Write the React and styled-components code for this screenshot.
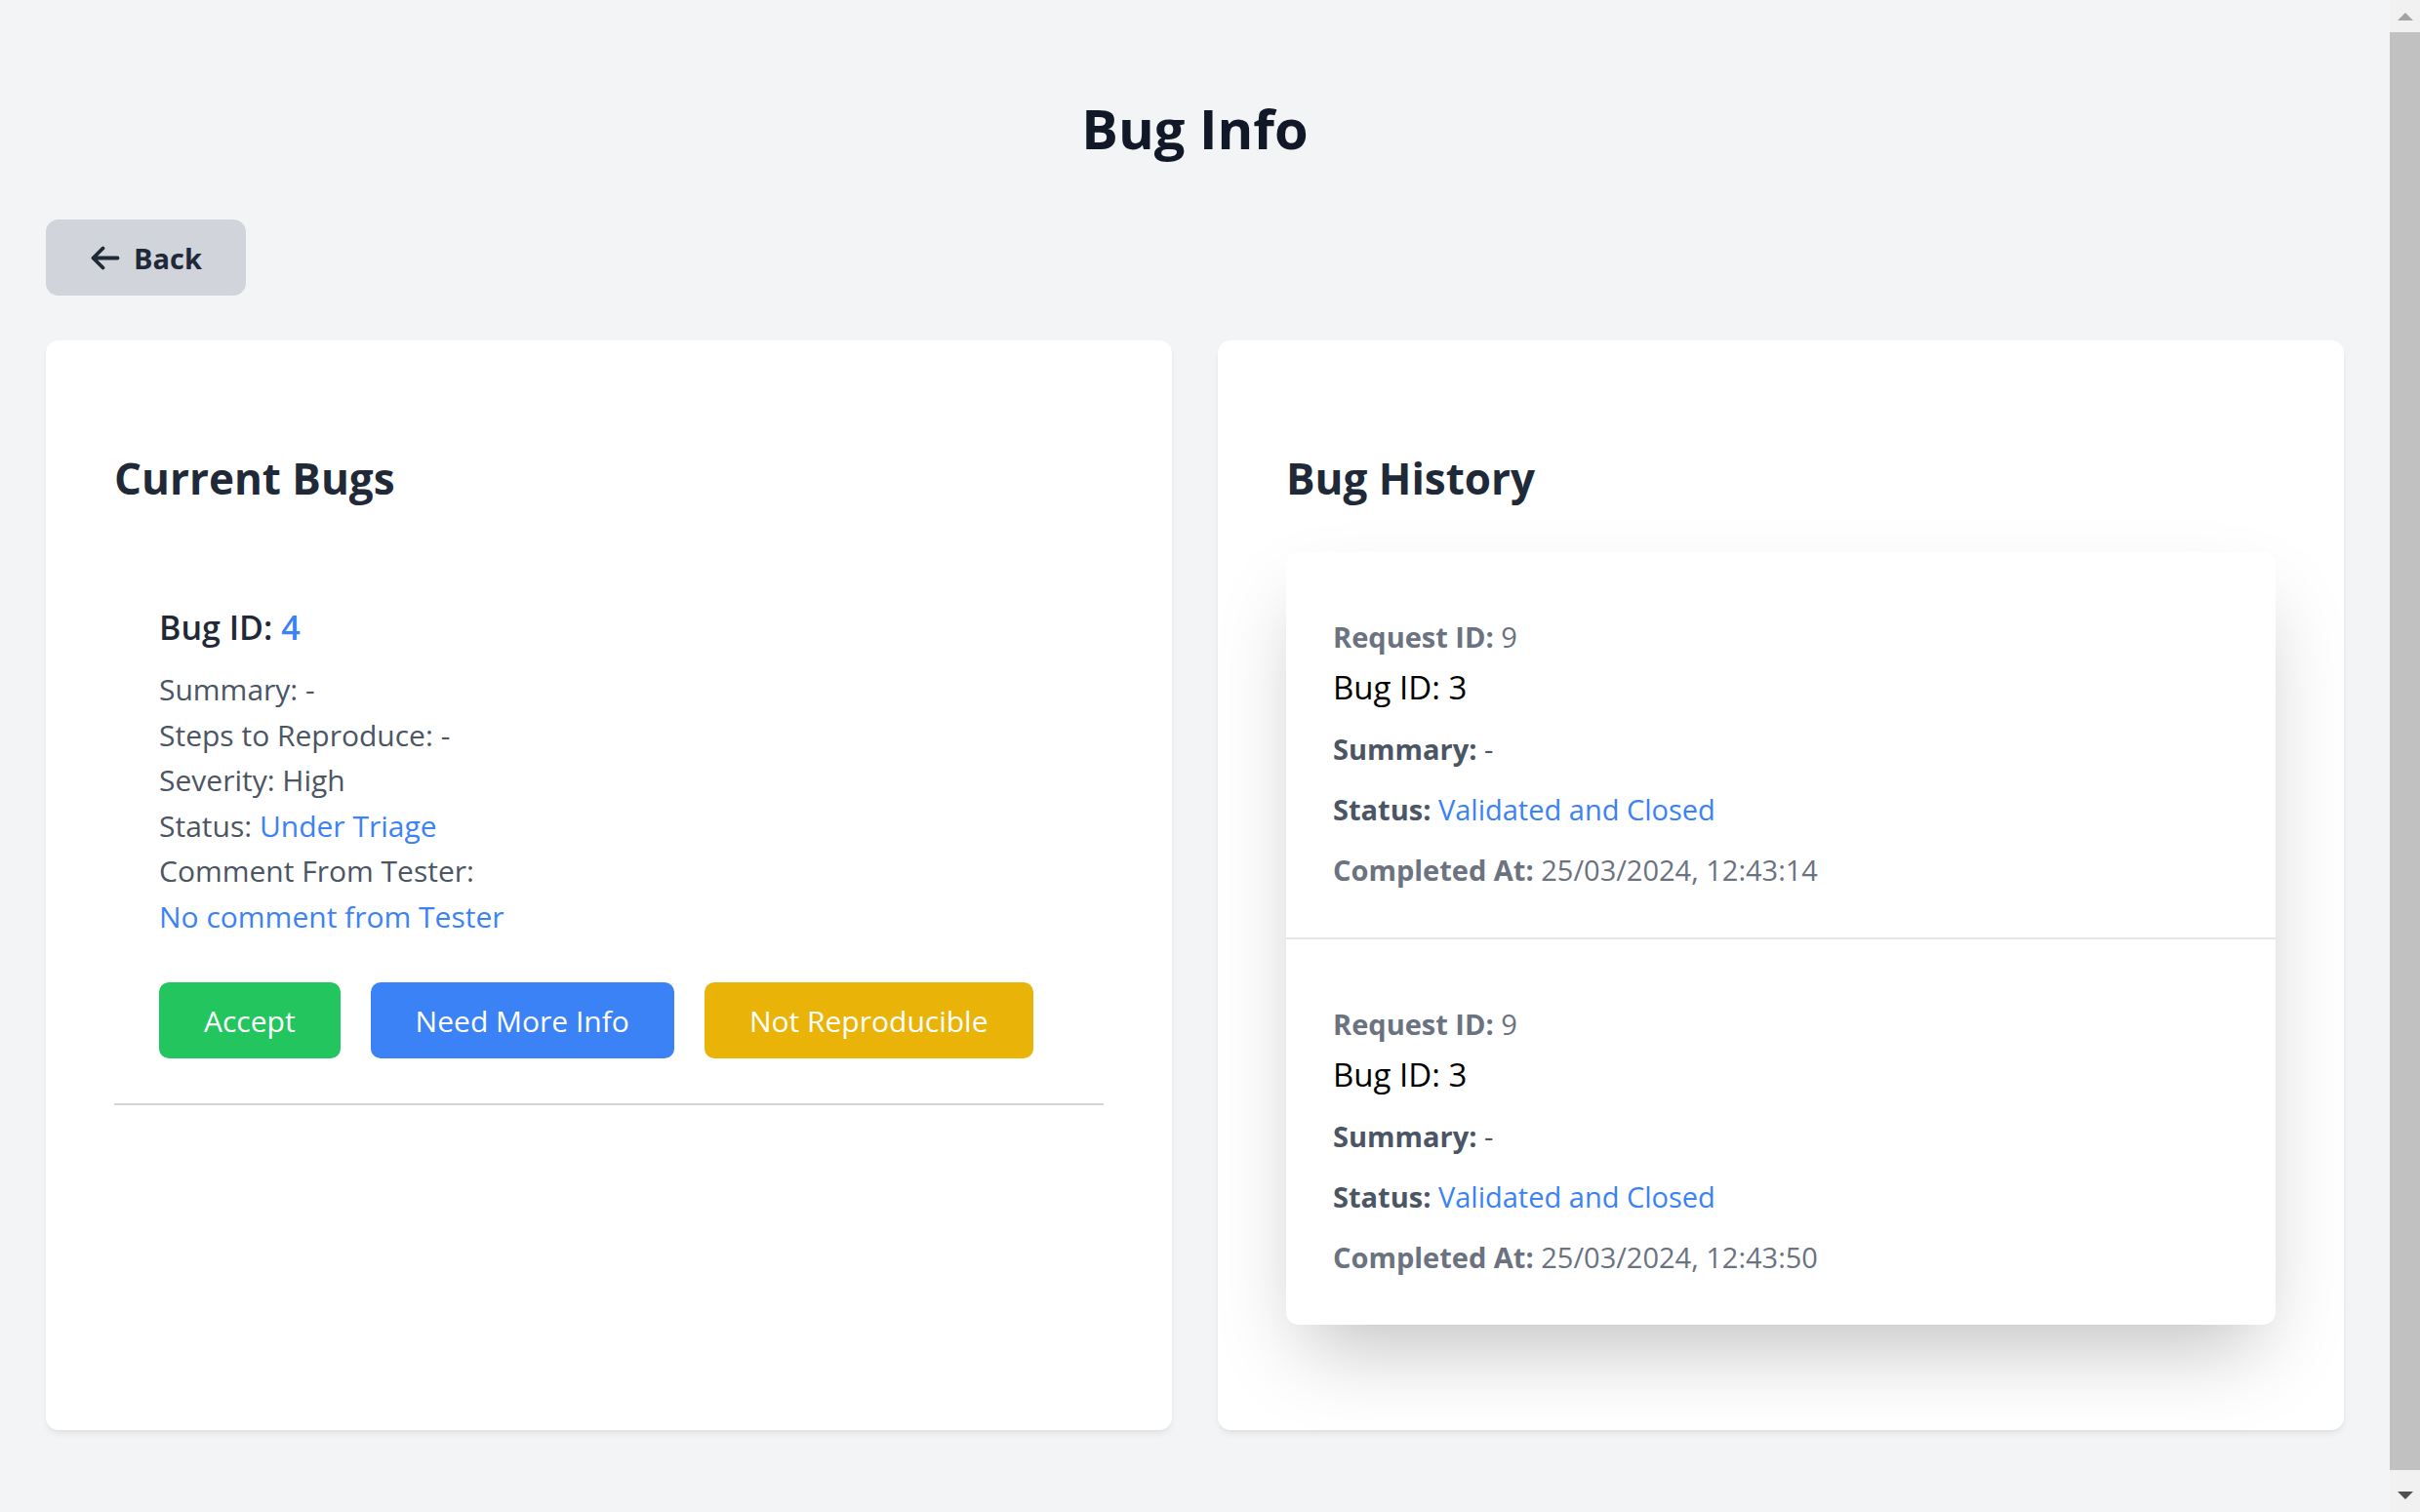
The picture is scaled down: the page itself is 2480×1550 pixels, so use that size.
import React from 'react';
import styled, { createGlobalStyle } from 'styled-components';

//Global:
const GlobalStyle = createGlobalStyle`
    html,
    body {
        margin: 0;
        padding: 0;
        background: #f3f4f6;
    }

    body {
        font-family: "Open Sans", "Noto Sans", sans-serif;
        color: #1f2937;
    }

    *,
    *::before,
    *::after {
        box-sizing: border-box;
    }
`;

//Styles:
const Page = styled.div`
    padding: 96px 78px 98px 47px;
`;

const PageTitle = styled.h1`
    margin: 0;
    text-align: center;
    font-size: 56px;
    line-height: 70px;
    font-weight: 700;
    color: #111827;
`;

const Toolbar = styled.div`
    display: flex;
    margin-top: 59px;
`;

const BackButton = styled.button`
    display: inline-flex;
    align-items: center;
    gap: 14px;
    height: 78px;
    padding: 0 45px 0 46px;
    border: none;
    border-radius: 13px;
    background: #d1d5db;
    color: #1f2937;
    font-family: inherit;
    font-size: 29px;
    font-weight: 700;
    cursor: pointer;
`;

const Columns = styled.div`
    display: grid;
    grid-template-columns: 1fr 1fr;
    gap: 47px;
    margin-top: 46px;
`;

const Card = styled.section`
    background: #ffffff;
    border-radius: 13px;
    box-shadow: 0 5px 9px -2px rgba(0, 0, 0, 0.07),
        0 2px 5px -2px rgba(0, 0, 0, 0.06);
    padding: 111px 70px 108px;
`;

const CardTitle = styled.h2`
    margin: 0 0 46px;
    font-size: 44px;
    line-height: 60px;
    font-weight: 700;
    color: #1f2937;
`;

const BugItem = styled.div`
    padding: 53px 46px 46px;
    border-bottom: 2px solid #d1d5db;
`;

const BugTitle = styled.h3`
    margin: 0 0 17px;
    font-size: 34px;
    line-height: 48px;
    font-weight: 600;
    color: #1f2937;
`;

const Accent = styled.span`
    color: #3b82f6;
`;

const Detail = styled.p`
    margin: 0;
    font-size: 30px;
    line-height: 46.5px;
    color: #4b5563;
`;

const Actions = styled.div`
    display: flex;
    gap: 31px;
    margin-top: 44px;
`;

const ActionButton = styled.button`
    height: 78px;
    padding: 0 46px;
    border: none;
    border-radius: 10px;
    background: ${(props) => props.$tone};
    color: #ffffff;
    font-family: inherit;
    font-size: 30px;
    cursor: pointer;
`;

const HistoryList = styled.div`
    background: #ffffff;
    border-radius: 13px;
    box-shadow: 0 40px 80px -19px rgba(0, 0, 0, 0.25);
    overflow: hidden;
`;

const HistoryItem = styled.div`
    padding: 63px 48px 47px;

    & + & {
        border-top: 2px solid #e5e7eb;
    }
`;

const RequestLine = styled.p`
    margin: 0;
    font-size: 29px;
    line-height: 48px;
    color: #6b7280;
`;

const HistoryBugTitle = styled.h4`
    margin: 5px 0 18px;
    font-size: 33px;
    line-height: 46px;
    font-weight: 400;
    color: #000000;
`;

const Field = styled.p`
    margin: 18px 0 0;
    font-size: 29px;
    line-height: 44px;
    color: ${(props) => props.$tone || '#4b5563'};

    &:first-of-type {
        margin-top: 0;
    }
`;

const Label = styled.strong`
    font-weight: 700;
`;

//Window scrollbar, drawn over the right edge:
const ScrollBar = styled.div`
    position: fixed;
    top: 0;
    right: 0;
    bottom: 0;
    width: 31px;
    display: flex;
    flex-direction: column;
    background: #f1f1f1;
`;

const ScrollArrow = styled.div`
    height: 31px;
    display: flex;
    justify-content: center;
    align-items: ${(props) => (props.$down ? 'flex-start' : 'flex-end')};
    padding: ${(props) => (props.$down ? '10px 0 0' : '0 0 10px')};

    &::after {
        content: '';
        border-left: 8px solid transparent;
        border-right: 8px solid transparent;
        ${(props) =>
            props.$down
                ? 'border-top: 8px solid #505050;'
                : 'border-bottom: 8px solid #a3a3a3;'}
    }
`;

const ScrollTrack = styled.div`
    flex: 1;
    display: flex;
    padding: 2px 0 12px;
`;

const ScrollThumb = styled.div`
    flex: 1;
    background: #c1c1c1;
`;

//Icon:
const ArrowLeft = () => (
    <svg width="30" height="25" viewBox="0 0 30 25" fill="none">
        <path
            d="M12.5 2.5 L2.5 12.5 L12.5 22.5 M2.5 12.5 H27.5"
            stroke="#1f2937"
            strokeWidth="3.8"
            strokeLinecap="round"
            strokeLinejoin="round"
        />
    </svg>
);

//Data:
const history = [
    { requestId: 9, bugId: 3, completedAt: '25/03/2024, 12:43:14' },
    { requestId: 9, bugId: 3, completedAt: '25/03/2024, 12:43:50' },
];

//Render:
const App = () => {
    return (
        <>
            <GlobalStyle />
            <Page>
                <PageTitle>Bug Info</PageTitle>
                <Toolbar>
                    <BackButton>
                        <ArrowLeft />
                        Back
                    </BackButton>
                </Toolbar>
                <Columns>
                    <Card>
                        <CardTitle>Current Bugs</CardTitle>
                        <BugItem>
                            <BugTitle>
                                Bug ID: <Accent>4</Accent>
                            </BugTitle>
                            <Detail>Summary: -</Detail>
                            <Detail>Steps to Reproduce: -</Detail>
                            <Detail>Severity: High</Detail>
                            <Detail>
                                Status: <Accent>Under Triage</Accent>
                            </Detail>
                            <Detail>Comment From Tester:</Detail>
                            <Detail>
                                <Accent>No comment from Tester</Accent>
                            </Detail>
                            <Actions>
                                <ActionButton $tone="#22c55e">Accept</ActionButton>
                                <ActionButton $tone="#3b82f6">
                                    Need More Info
                                </ActionButton>
                                <ActionButton $tone="#eab308">
                                    Not Reproducible
                                </ActionButton>
                            </Actions>
                        </BugItem>
                    </Card>
                    <Card>
                        <CardTitle>Bug History</CardTitle>
                        <HistoryList>
                            {history.map((item, i) => (
                                <HistoryItem key={i}>
                                    <RequestLine>
                                        <Label>Request ID:</Label> {item.requestId}
                                    </RequestLine>
                                    <HistoryBugTitle>Bug ID: {item.bugId}</HistoryBugTitle>
                                    <Field>
                                        <Label>Summary:</Label> -
                                    </Field>
                                    <Field>
                                        <Label>Status:</Label>{' '}
                                        <Accent>Validated and Closed</Accent>
                                    </Field>
                                    <Field $tone="#6b7280">
                                        <Label>Completed At:</Label> {item.completedAt}
                                    </Field>
                                </HistoryItem>
                            ))}
                        </HistoryList>
                    </Card>
                </Columns>
            </Page>
            <ScrollBar>
                <ScrollArrow />
                <ScrollTrack>
                    <ScrollThumb />
                </ScrollTrack>
                <ScrollArrow $down />
            </ScrollBar>
        </>
    );
};

export default App;
